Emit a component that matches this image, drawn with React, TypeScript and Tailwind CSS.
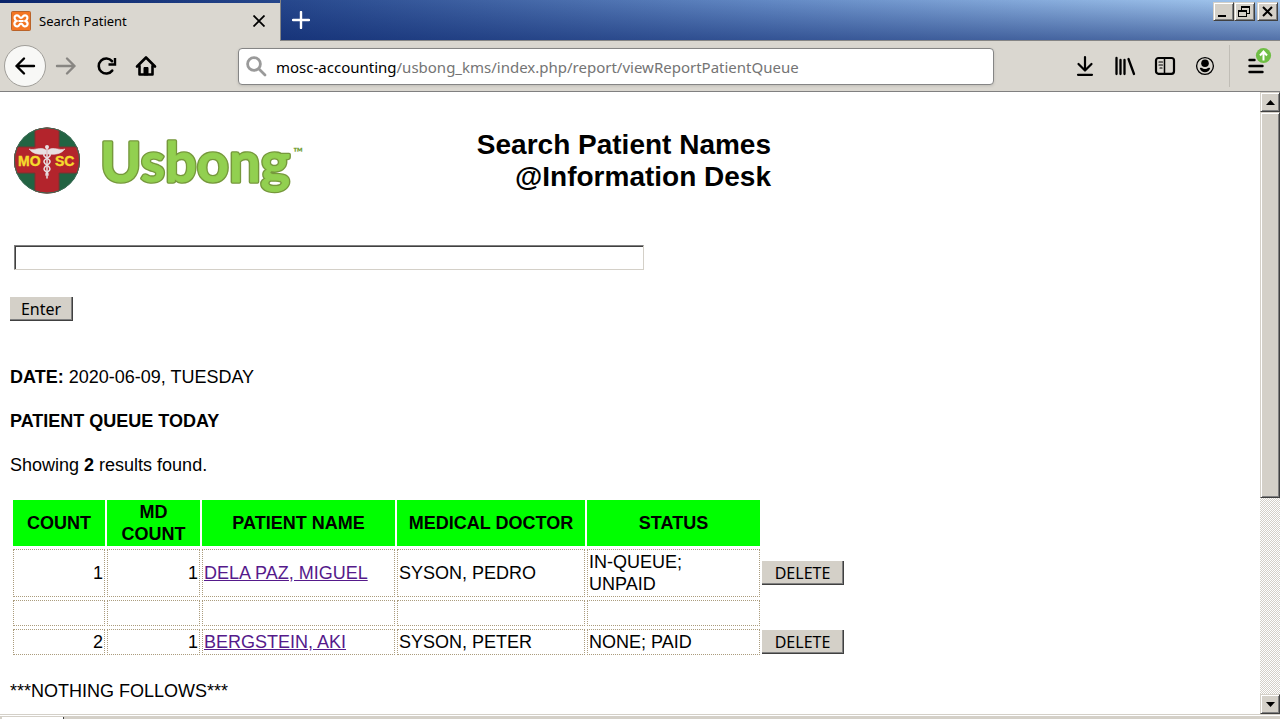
import type { ReactNode } from "react";

const UI_FONT = "font-['Noto_Sans','Open_Sans',sans-serif]";

const RAISED =
  "bg-[#d4d0c8] border-t border-l border-r border-b border-t-[#d4d0c8] border-l-[#d4d0c8] border-r-[#404040] border-b-[#404040] shadow-[inset_1px_1px_0_#ffffff,inset_-1px_-1px_0_#808080]";

const FLAT_BUTTON =
  "h-6 bg-[#d4d0c8] border-r border-b border-[#404040] shadow-[inset_-1px_-1px_0_#808080] text-[16px] leading-5 text-black pt-px";

type Row = {
  count: string;
  mdCount: string;
  name: string;
  doctor: string;
  status: string;
};

const rows: (Row | null)[] = [
  { count: "1", mdCount: "1", name: "DELA PAZ, MIGUEL", doctor: "SYSON, PEDRO", status: "IN-QUEUE; UNPAID" },
  null,
  { count: "2", mdCount: "1", name: "BERGSTEIN, AKI", doctor: "SYSON, PETER", status: "NONE; PAID" },
];

function XamppIcon() {
  return (
    <svg width="20" height="20" viewBox="0 0 20 20" aria-hidden="true">
      <rect x="0.5" y="0.5" width="19" height="19" rx="1" fill="#f37623" stroke="#b9632a" />
      <path
        d="M7 4.6c-2.2-.6-3.6.6-3.4 2.6.1 1.300.8 2.200 1.900 2.700-1.500.7-2.300 1.800-2.100 3.300.2 1.700 1.700 2.500 3.600 2 1.300-.3 1.300-2.500 3-2.500s1.700 2.200 3 2.500c1.900.5 3.400-.3 3.600-2 .2-1.500-.6-2.600-2.100-3.300 1.100-.5 1.800-1.400 1.900-2.700.2-2-1.200-3.200-3.400-2.600-1.200.3-1.300 2.400-3 2.400S8.200 4.900 7 4.600z"
        fill="none"
        stroke="#ffffff"
        strokeWidth="2.2"
      />
      <path d="M7.500 10h5" stroke="#ffffff" strokeWidth="2" />
    </svg>
  );
}

function Icon({ children, size = 22 }: { children: ReactNode; size?: number }) {
  return (
    <svg
      width={size}
      height={size}
      viewBox="0 0 22 22"
      fill="none"
      stroke="currentColor"
      strokeWidth="2.4"
      strokeLinecap="round"
      strokeLinejoin="round"
      aria-hidden="true"
    >
      {children}
    </svg>
  );
}

function MoscLogo() {
  return (
    <svg width="68" height="68" viewBox="0 0 68 68" role="img" aria-label="MOSC">
      <defs>
        <clipPath id="disc">
          <circle cx="33" cy="33.500" r="33" />
        </clipPath>
      </defs>
      <g clipPath="url(#disc)">
        <rect width="68" height="68" fill="#226443" />
        <path d="M21 0H45V20H68V46H45V68H21V46H0V20H21Z" fill="#b3242c" stroke="#7c3030" strokeWidth="1" />
      </g>
      <circle cx="33" cy="33.500" r="32.500" fill="none" stroke="#3a6a55" strokeWidth="1" />
      <g fontFamily="'Liberation Sans',sans-serif" fontWeight="700" fontSize="14" fill="#f6dc2d" stroke="#f6dc2d" strokeWidth="0.400">
        <text x="4" y="39">MO</text>
        <text x="41" y="39">SC</text>
      </g>
      <g stroke="#e8dfe2" fill="none" strokeLinecap="round">
        <path d="M33 20V51" strokeWidth="1.500" />
        <path d="M32 23C26 19 21 24 15 22C19 27 25 28 32 27Z" fill="#e8dfe2" strokeWidth="0.600" />
        <path d="M34 23C40 19 45 24 51 22C47 27 41 28 34 27Z" fill="#e8dfe2" strokeWidth="0.600" />
        <path d="M30 27C28 31 37 31 36 35C35 39 30 38 30 42C30 45 35 45 34 48" strokeWidth="1.500" />
        <path d="M36 27C38 31 29 31 30 35C31 39 36 38 36 42C36 45 31 45 32 48" strokeWidth="1.500" />
      </g>
      <circle cx="33" cy="20" r="2" fill="#e8dfe2" />
    </svg>
  );
}

function UsbongLogo() {
  return (
    <svg width="216" height="72" viewBox="0 0 216 72" role="img" aria-label="Usbong">
      <g fontFamily="Lato,'Open Sans',sans-serif" fontWeight="700" fontSize="56" fill="#92d050" strokeLinejoin="round">
        <text x="6" y="55" stroke="#76983c" strokeWidth="3.600">
          Usbong
        </text>
        <text x="6" y="55" stroke="#92d050" strokeWidth="0.800" aria-hidden="true">
          Usbong
        </text>
      </g>
      <text x="199" y="30" fontFamily="Lato,sans-serif" fontWeight="900" fontSize="13" fill="#76a23c">
        ™
      </text>
    </svg>
  );
}

function TitleBar() {
  return (
    <header className="flex h-[41px] shrink-0 bg-[linear-gradient(to_bottom,rgba(10,36,106,0),rgba(10,36,106,0.55)),linear-gradient(to_right,#0a246a_0%,#26478c_22%,#6389c4_60%,#a6caf0_100%)]">
      <div className="mt-[3px] flex w-[280px] items-center bg-[#dad7d0] pb-0.5 pl-[11px] pr-3">
        <XamppIcon />
        <span className="ml-2 flex-1 text-[13px] leading-5 text-black">Search Patient</span>
        <button type="button" aria-label="Close tab" className="flex h-5 w-[18px] items-center justify-center">
          <svg width="12" height="12" viewBox="0 0 12 12" stroke="#000" strokeWidth="1.800" aria-hidden="true">
            <path d="M0.500 0.500l11 11M11.500 0.500L0.500 11.500" />
          </svg>
        </button>
      </div>
      <div className="flex flex-1 items-start border-b border-l border-[#858585]">
        <button type="button" aria-label="New tab" className="flex h-10 w-10 items-center justify-center">
          <svg width="18" height="18" viewBox="0 0 18 18" stroke="#fff" strokeWidth="2.400" strokeLinecap="round" aria-hidden="true">
            <path d="M9 1v16M1 9h16" />
          </svg>
        </button>
        <div className="ml-auto mr-0.5 mt-0.5 flex">
          <button type="button" aria-label="Minimize" className={`flex h-[19px] w-[21px] items-end justify-start ${RAISED}`}>
            <svg width="19" height="17" aria-hidden="true">
              <path d="M4 12h8v2H4z" />
            </svg>
          </button>
          <button type="button" aria-label="Restore" className={`flex h-[19px] w-[21px] items-center justify-center ${RAISED}`}>
            <svg width="19" height="17" fill="none" stroke="#000" shapeRendering="crispEdges" aria-hidden="true">
              <path d="M6.500 8V3.500h8V10H12M6 4.500h9M3.500 7.500h8v6h-8zM3 8.500h9" />
            </svg>
          </button>
          <button type="button" aria-label="Close" className={`ml-0.5 flex h-[19px] w-[21px] items-center justify-center ${RAISED}`}>
            <svg width="19" height="17" stroke="#000" strokeWidth="2" aria-hidden="true">
              <path d="M5 4l9 9M14 4l-9 9" />
            </svg>
          </button>
        </div>
      </div>
    </header>
  );
}

function Toolbar() {
  return (
    <nav className="flex h-[51px] shrink-0 items-center border-b border-[#808080] bg-[#dad7d0] text-black">
      <div className="flex w-[238px] shrink-0 items-center pl-1">
        <button
          type="button"
          aria-label="Back"
          className="flex size-[42px] items-center justify-center rounded-full border border-[#a09e99] bg-[#f8f8f6]"
        >
          <Icon>
            <path d="M20 11H2.500M10 3.500L2.500 11l7.500 7.500" />
          </Icon>
        </button>
        <button type="button" aria-label="Forward" className="ml-[9px] flex h-8 w-[22px] items-center text-[#888682]">
          <Icon>
            <path d="M2 11h17.500M12 3.500l7.500 7.500-7.500 7.500" />
          </Icon>
        </button>
        <button type="button" aria-label="Reload" className="ml-[19px] flex h-8 w-[22px] items-center">
          <Icon>
            <path d="M16.200 15.600A7.500 7.500 0 1 1 16 6.200" strokeWidth="2.600" />
            <path d="M19 3v6.500h-6.500" strokeWidth="2.400" strokeLinecap="butt" strokeLinejoin="miter" />
          </Icon>
        </button>
        <button type="button" aria-label="Home" className="ml-[17px] flex h-8 w-[22px] items-center">
          <Icon>
            <path d="M2 11.500l9-9 9 9M4.500 11v8.500h13V11" strokeWidth="2.600" />
            <path d="M9 19.500v-7h4v7z" fill="currentColor" strokeWidth="1" />
          </Icon>
        </button>
      </div>
      <div className="flex h-[37px] w-[756px] min-w-0 items-center rounded-sm border border-[#858585] bg-white pl-[7px] shadow-[0_1px_3px_rgba(0,0,0,0.12)]">
        <svg width="21" height="21" viewBox="0 0 21 21" fill="none" stroke="#9a9a9a" strokeWidth="2.800" strokeLinecap="round" aria-hidden="true">
          <circle cx="8" cy="8" r="6.400" />
          <path d="M13 13l6 6" />
        </svg>
        <p className="ml-[9px] truncate pt-px text-[15px] leading-6 text-[#747474]">
          <span className="text-black">mosc-accounting</span>/usbong_kms/index.php/report/viewReportPatientQueue
        </p>
      </div>
      <div className="ml-auto flex h-full items-center">
        <div className="flex gap-[18px] pr-[13px]">
          <button type="button" aria-label="Downloads" className="flex h-8 w-[22px] items-center">
            <Icon>
              <path d="M11 2v13M4.500 9l6.500 6.500L17.500 9M4 19.800h14" strokeWidth="2.200" />
            </Icon>
          </button>
          <button type="button" aria-label="Library" className="flex h-8 w-[22px] items-center">
            <Icon>
              <path d="M2.500 3v16M6.500 5v14M10.500 5v14M14.500 4l5.500 15" strokeWidth="2.300" />
            </Icon>
          </button>
          <button type="button" aria-label="Sidebars" className="flex h-8 w-[22px] items-center">
            <Icon>
              <rect x="2" y="3" width="18" height="15.800" rx="2.500" strokeWidth="2.200" />
              <path d="M10.500 3v15.500" strokeWidth="1.500" />
              <path d="M5 7h3.500M5 10h3.500M6 13h2" strokeWidth="1.200" />
            </Icon>
          </button>
          <button type="button" aria-label="Account" className="flex h-8 w-[22px] items-center">
            <Icon>
              <circle cx="11" cy="11" r="8.400" strokeWidth="1.300" />
              <circle cx="11" cy="8.300" r="3.800" fill="currentColor" stroke="none" />
              <path d="M5.800 13.200C7 12.600 8 12.900 8.800 13.400C10.200 14.100 11.800 14.100 13.200 13.400C14 12.900 15 12.600 16.200 13.200C15.400 15.800 13.300 17.200 11 17.200C8.700 17.200 6.600 15.800 5.800 13.200Z" fill="currentColor" stroke="none" />
            </Icon>
          </button>
        </div>
        <div className="h-[42px] w-px bg-[#c0bdb6]" />
        <button type="button" aria-label="Open menu" className="flex h-full w-[50px] items-start pl-[17px] pt-[6px]">
          <svg width="26" height="30" viewBox="0 0 26 30" aria-hidden="true">
            <path d="M2.500 13h5M2.500 19h13M2.500 25h13" stroke="#000" strokeWidth="2.400" strokeLinecap="round" />
            <circle cx="16.500" cy="8.500" r="7.600" fill="#6fbe45" />
            <path d="M16.500 13.500V5M13 8.500l3.500-4L20 8.500" stroke="#fff" strokeWidth="2" fill="none" />
          </svg>
        </button>
      </div>
    </nav>
  );
}

function Scrollbar() {
  return (
    <div className="flex w-5 shrink-0 flex-col bg-[repeating-conic-gradient(#d4d0c8_0_25%,#ffffff_0_50%)] bg-[length:2px_2px]">
      <button type="button" aria-label="Scroll up" className={`flex h-5 items-center justify-center ${RAISED}`}>
        <svg width="9" height="5" aria-hidden="true">
          <path d="M0 5L4.500 0L9 5z" />
        </svg>
      </button>
      <div className={`grow-[386] ${RAISED}`} />
      <div className="grow-[197]" />
      <button type="button" aria-label="Scroll down" className={`flex h-5 items-center justify-center ${RAISED}`}>
        <svg width="9" height="5" aria-hidden="true">
          <path d="M0 0L4.500 5L9 0z" />
        </svg>
      </button>
    </div>
  );
}

const CELL = "h-[26px] border border-dotted border-[#ab9c7d] p-px";

function QueueTable() {
  return (
    <table className="ml-px mt-5 w-[835px] table-fixed border-separate border-spacing-x-[2px] border-spacing-y-[3px]">
      <colgroup>
        <col className="w-[92px]" />
        <col className="w-[93px]" />
        <col className="w-[193px]" />
        <col className="w-[188px]" />
        <col className="w-[173px]" />
        <col className="w-[82px]" />
      </colgroup>
      <thead>
        <tr className="text-center font-bold">
          <th scope="col" className="bg-[#00ff00] p-px">COUNT</th>
          <th scope="col" className="bg-[#00ff00] px-2 py-px">MD COUNT</th>
          <th scope="col" className="bg-[#00ff00] p-px">PATIENT NAME</th>
          <th scope="col" className="bg-[#00ff00] p-px">MEDICAL DOCTOR</th>
          <th scope="col" className="bg-[#00ff00] p-px">STATUS</th>
          <td />
        </tr>
      </thead>
      <tbody>
        {rows.map((row, index) =>
          row ? (
            <tr key={index}>
              <td className={`${CELL} text-right`}>{row.count}</td>
              <td className={`${CELL} text-right`}>{row.mdCount}</td>
              <td className={CELL}>
                <a href="#patient" className="text-[#551a8b] underline">{row.name}</a>
              </td>
              <td className={CELL}>{row.doctor}</td>
              <td className={`${CELL} pr-16`}>{row.status}</td>
              <td className="p-0">
                <button type="button" className={`block w-full ${UI_FONT} ${FLAT_BUTTON}`}>DELETE</button>
              </td>
            </tr>
          ) : (
            <tr key={index}>
              <td className={CELL} />
              <td className={CELL} />
              <td className={CELL} />
              <td className={CELL} />
              <td className={CELL} />
              <td />
            </tr>
          ),
        )}
      </tbody>
    </table>
  );
}

export default function App() {
  return (
    <div className={`flex h-screen flex-col overflow-hidden bg-white ${UI_FONT}`}>
      <TitleBar />
      <Toolbar />
      <div className="flex min-h-0 flex-1">
        <main className="min-w-0 flex-1 overflow-hidden pl-[10px] pt-[35px] font-['Liberation_Sans',Arial,sans-serif] text-[18px] leading-[22px] text-black">
          <div className="flex h-[68px] max-w-[761px] items-start pl-1">
            <MoscLogo />
            <div className="ml-3">
              <UsbongLogo />
            </div>
            <h1 className="ml-auto mt-[2px] text-right text-[28px] font-bold leading-8">
              Search Patient Names
              <br />
              @Information Desk
            </h1>
          </div>
          <form onSubmit={(event) => event.preventDefault()}>
            <input
              type="text"
              aria-label="Patient name"
              className="ml-1 mt-[50px] block h-[25px] w-[630px] border border-b-[#d4d0c8] border-l-[#808080] border-r-[#d4d0c8] border-t-[#808080] bg-white px-1 shadow-[inset_1px_1px_0_#404040] outline-none"
            />
            <button type="submit" className={`mt-[27px] block w-[63px] ${UI_FONT} ${FLAT_BUTTON}`}>Enter</button>
          </form>
          <p className="mt-[45px]">
            <b>DATE:</b> 2020-06-09, TUESDAY
          </p>
          <p className="mt-[22px] font-bold">PATIENT QUEUE TODAY</p>
          <p className="mt-[22px]">
            Showing <b>2</b> results found.
          </p>
          <div className="pt-px">
            <QueueTable />
          </div>
          <p className="mt-[22px]">***NOTHING FOLLOWS***</p>
        </main>
        <Scrollbar />
      </div>
      <footer className="h-[5px] shrink-0 border-t border-[#d4d0c8] pt-px">
        <div className="h-[3px] bg-[#d4d0c8] pl-0.5 pt-px">
          <div className="h-0.5 w-[62px] border-r border-[#404040] bg-white" />
        </div>
      </footer>
    </div>
  );
}
